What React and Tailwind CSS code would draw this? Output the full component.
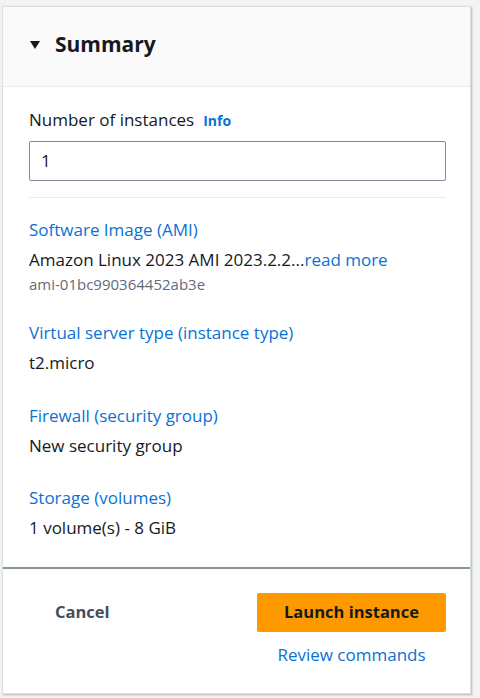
import React from "react";

const font = { fontFamily: '"Open Sans", "Noto Sans", Arial, sans-serif' };

function Item({ label, value, extra, className = "" }) {
  return (
    <div className={className}>
      <div className="text-[17px] leading-[22px] text-[#0972d3]">{label}</div>
      <div className="mt-[8px] text-[17px] leading-[22px] text-[#16191f]">{value}</div>
      {extra}
    </div>
  );
}

export default function App() {
  return (
    <div className="w-[480px] h-[698px] bg-[#f2f3f3] pt-[6px] pl-[2px] overflow-hidden" style={font}>
      <div className="w-[469px] h-[688px] bg-white border border-[#dcdfe1] shadow-[1px_1px_2px_rgba(0,0,0,0.25)] flex flex-col">
        <div className="h-[80px] bg-[#fafafa] border-b border-[#e9ebed] flex items-center pl-[26px] pb-[4px]">
          <svg width="12" height="10" viewBox="0 0 12 10" className="mr-[14px] mt-[1px]">
            <polygon points="1,1 11,1 6,9" fill="#16191f" />
          </svg>
          <span className="text-[21px] font-bold text-[#16191f] leading-none">Summary</span>
        </div>
        <div className="pl-[26px] pr-[24px] pt-[22px]">
          <div className="flex items-baseline gap-[9px] leading-[22px]">
            <span className="text-[17px] text-[#16191f]">Number of instances</span>
            <span className="text-[14px] font-bold text-[#0972d3]">Info</span>
          </div>
          <div className="mt-[9px] h-[40px] border border-[#7d8998] rounded-[2px] flex items-center pl-[11px] text-[17px] text-[#16191f]">
            1
          </div>
          <div className="mt-[16px] h-px bg-[#e9ebed]" />
          <Item
            className="mt-[21px]"
            label="Software Image (AMI)"
            value={
              <span>
                Amazon Linux 2023 AMI 2023.2.2...<span className="text-[#0972d3]">read more</span>
              </span>
            }
            extra={
              <div className="mt-[3px] text-[15px] leading-[20px] text-[#5f6b7a]">ami-01bc990364452ab3e</div>
            }
          />
          <Item className="mt-[28px]" label="Virtual server type (instance type)" value="t2.micro" />
          <Item className="mt-[31px]" label="Firewall (security group)" value="New security group" />
          <Item className="mt-[30px]" label="Storage (volumes)" value="1 volume(s) - 8 GiB" />
        </div>
        <div className="mt-[28px] h-[2px] bg-[#879596]" />
        <div className="flex justify-between pl-[26px] pr-[24px] pt-[24px]">
          <div className="pl-[26px] h-[39px] flex items-center text-[16.5px] font-bold text-[#414d5c]">Cancel</div>
          <div className="flex flex-col items-center w-[189px]">
            <div className="w-full h-[39px] bg-[#ff9900] rounded-[2px] flex items-center justify-center text-[16.5px] font-bold text-[#16191f]">
              Launch instance
            </div>
            <div className="mt-[12px] text-[17px] leading-[22px] text-[#0972d3]">Review commands</div>
          </div>
        </div>
      </div>
    </div>
  );
}
